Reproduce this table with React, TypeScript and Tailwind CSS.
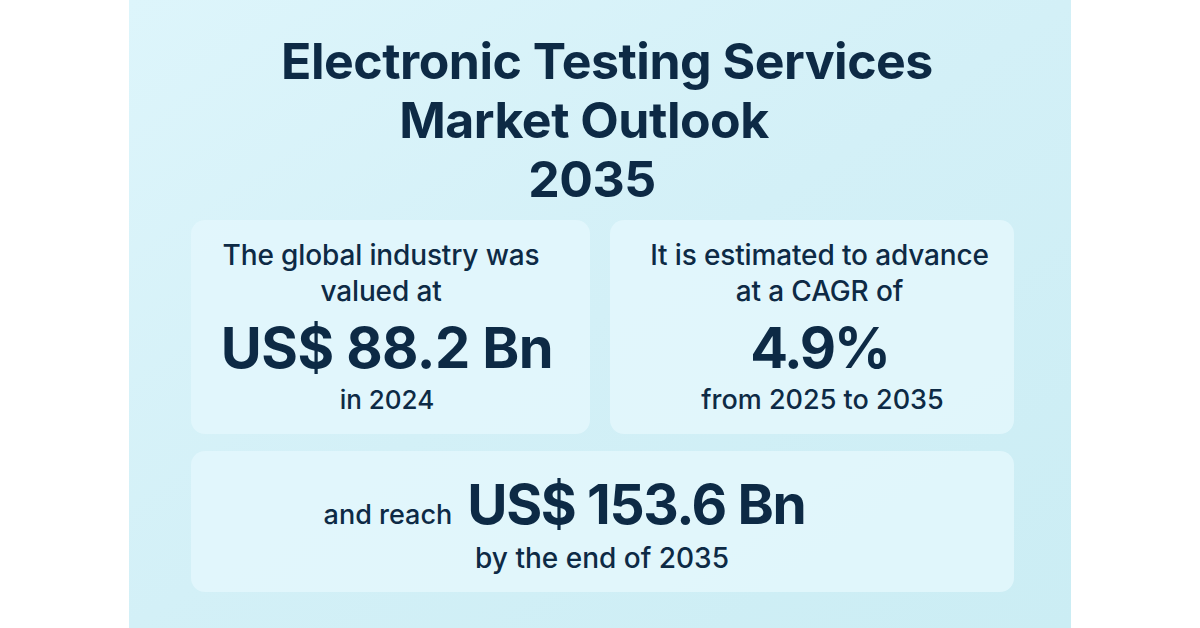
export default function App() {
  return (
    <div className="flex h-[628px] w-[1200px] justify-center bg-white font-['Inter',_'Liberation_Sans',_sans-serif] text-[#0d2a45]">
      <div className="flex h-full w-[942px] flex-col items-center bg-gradient-to-br from-[#ddf5fb] via-[#d3f0f7] to-[#cbedf4] pt-[32px]">
        <h1 className="text-center text-[50px] font-bold leading-[59px] tracking-[-0.01em]">
          <div className="pl-[14px]">Electronic Testing Services</div>
          <div className="pr-[32px]">Market Outlook</div>
          <div className="pr-[16px]">2035</div>
        </h1>

        <div className="mt-[11px] grid w-[823px] grid-cols-[399px_404px] gap-x-[20px] gap-y-[17px] pl-[2px]">
          <div className="flex h-[214px] flex-col items-center rounded-[14px] bg-[#e2f6fc]/90 pt-[17px] pr-[6px] text-center">
            <p className="mr-[12px] text-[28px] font-medium leading-[36px] tracking-[-0.005em]">
              The global industry was
              <br />
              valued at
            </p>
            <p className="mt-[7px] text-[56px] font-bold leading-[64px] tracking-[-0.01em]">US$ 88.2 Bn</p>
            <p className="mt-[3px] text-[26px] font-medium leading-[34px]">in 2024</p>
          </div>

          <div className="flex h-[214px] flex-col items-center rounded-[14px] bg-[#e2f6fc]/90 pt-[17px] pl-[16px] text-center">
            <p className="text-[28px] font-medium leading-[36px] tracking-[-0.005em]">
              It is estimated to advance
              <br />
              at a CAGR of
            </p>
            <p className="mt-[7px] text-[56px] font-bold leading-[64px] tracking-[-0.04em]">4.9%</p>
            <p className="mt-[3px] ml-[6px] text-[27px] font-medium leading-[34px]">from 2025 to 2035</p>
          </div>

          <div className="col-span-2 flex h-[141px] flex-col items-center rounded-[14px] bg-[#e2f6fc]/90 pt-[21px] text-center">
            <div className="flex items-baseline gap-[15px] pr-[75px]">
              <span className="text-[27px] font-medium">and reach</span>
              <span className="text-[55px] font-bold leading-[64px] tracking-[-0.025em]">US$ 153.6 Bn</span>
            </div>
            <p className="mt-[4px] text-[28px] font-medium leading-[36px]">by the end of 2035</p>
          </div>
        </div>
      </div>
    </div>
  );
}
